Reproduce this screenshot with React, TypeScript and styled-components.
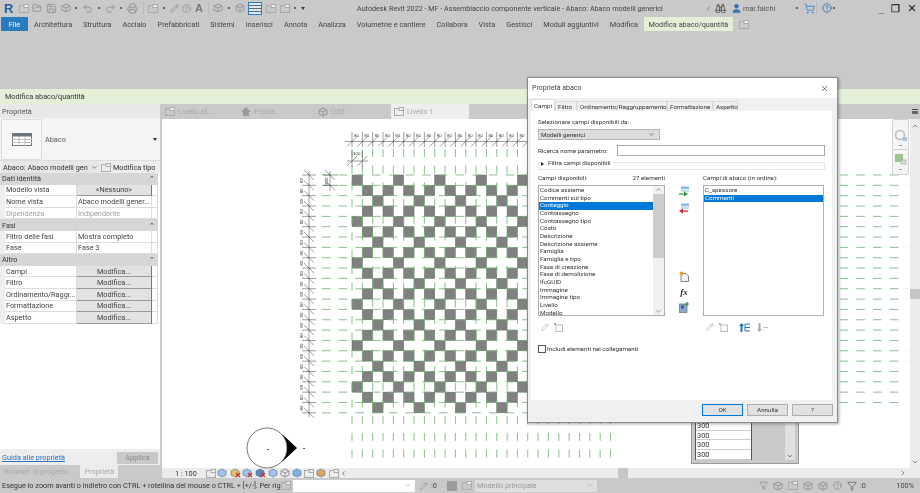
import React from 'react';
import styled, { createGlobalStyle } from 'styled-components';
import {
	Binoculars,
	ChevronDown,
	ChevronLeft,
	ChevronRight,
	ChevronUp,
	CircleHelp,
	Filter,
	FolderOpen,
	Pencil,
	Printer,
	Redo2,
	Save,
	ShoppingCart,
	Undo2,
	User,
	X,
} from 'lucide-react';

const GlobalStyle = createGlobalStyle`
	html, body {
		margin: 0;
		padding: 0;
		background: #c9c9c9;
		overflow: hidden;
	}
	* {
		box-sizing: border-box;
	}
`;

const UI_FONT = `'Roboto', 'Liberation Sans', sans-serif`;

const Window = styled.div`
	position: relative;
	width: 920px;
	height: 493px;
	display: flex;
	flex-direction: column;
	overflow: hidden;
	background: #c9c9c9;
	color: #333;
	font-family: ${UI_FONT};
	font-size: 7.3px;
	filter: blur(0.4px);
`;

/* title bar */
const TitleBar = styled.div`
	height: 16px;
	flex: none;
	display: flex;
	align-items: center;
	padding: 0 3px 0 4px;
`;

const Qat = styled.div`
	width: 353px;
	display: flex;
	align-items: center;
	gap: 3.7px;
	color: #8f8f8f;
`;

const RevitLogo = styled.span`
	font: bold 13px 'Liberation Sans', sans-serif;
	color: #1f5fa8;
	width: 11px;
`;

const QatDot = styled.span`
	width: 2px;
	height: 2px;
	margin: 0 1px;
	background: #666;
`;

const QatSep = styled.span`
	width: 1px;
	height: 12px;
	margin: 0 1px;
	background: #b9b9b9;
`;

const QatLetter = styled.span`
	font: bold 11px 'Liberation Sans', sans-serif;
	color: #777;
`;

const ThinLines = styled.span`
	width: 14px;
	height: 13px;
	border: 1px solid #2f7fc6;
	background: repeating-linear-gradient(#dfe9f2 0 2px, #5a6b7c 2px 3px);
`;

const Title = styled.div`
	width: 340px;
	font-size: 7.2px;
	white-space: nowrap;
	color: #444;
`;

const TitleRight = styled.div`
	flex: 1;
	display: flex;
	align-items: center;
	color: #555;
`;

const UserName = styled.span`
	width: 52px;
	margin-left: 1px;
	color: #555;
`;

const WindowButtons = styled.div`
	margin-left: auto;
	display: flex;
	align-items: center;
	gap: 7px;
	font: bold 10px 'Liberation Sans', sans-serif;
	color: #333;
`;

/* ribbon */
const TabBar = styled.div`
	height: 14px;
	margin-top: 1px;
	flex: none;
	display: flex;
	align-items: stretch;
	padding-left: 1px;
`;

const FileTab = styled.div`
	width: 27px;
	background: #2b7cbf;
	color: #fff;
	display: flex;
	align-items: center;
	justify-content: center;
	margin-right: 0.5px;
`;

const RibbonTab = styled.div<{ $active?: boolean }>`
	display: flex;
	align-items: center;
	white-space: nowrap;
	padding: 0 ${p => (p.$active ? '5px' : '5.5px')};
	background: ${p => (p.$active ? '#e4efd8' : 'transparent')};
	color: #444;
`;

const RibbonBody = styled.div`
	height: 58px;
	flex: none;
`;

const ContextBand = styled.div`
	height: 15px;
	flex: none;
	background: #e4efd8;
	display: flex;
	align-items: center;
	padding-left: 5px;
	color: #333;
`;

/* workspace */
const Workspace = styled.div`
	flex: 1;
	display: flex;
	min-height: 0;
`;

const PropertiesPane = styled.div`
	width: 160px;
	flex: none;
	display: flex;
	flex-direction: column;
	background: #ededed;
`;

const PaneHeader = styled.div`
	height: 14px;
	flex: none;
	padding-left: 2px;
	display: flex;
	align-items: center;
	color: #555;
	background: #e8e8e8;
`;

const TypeSelector = styled.div`
	height: 43px;
	flex: none;
	display: flex;
	align-items: center;
	background: #f4f4f4;
	padding-right: 3px;
	border-bottom: 1px solid #ddd;
`;

const TypeThumb = styled.div`
	width: 41px;
	height: 41px;
	margin-left: 1px;
	border: 1px solid #ddd;
	background: #f7f7f7;
	display: flex;
	align-items: center;
	justify-content: center;
`;

const TypeName = styled.span`
	margin-left: 3px;
	flex: 1;
	color: #555;
`;

const Caret = styled.span`
	width: 0;
	height: 0;
	border-left: 2px solid transparent;
	border-right: 2px solid transparent;
	border-top: 3px solid #333;
`;

const ComboRow = styled.div`
	height: 12px;
	flex: none;
	display: flex;
	align-items: center;
	gap: 2px;
	white-space: nowrap;
`;

const InstanceCombo = styled.div`
	width: 98px;
	height: 12px;
	margin-left: 1px;
	padding: 0 1px 0 2px;
	display: flex;
	align-items: center;
	justify-content: space-between;
	background: #e6e6e6;
	color: #333;
`;

const PropTable = styled.div`
	background: #fff;
	flex: 1;
	min-height: 0;
	padding-right: 2px;
`;

const SectionRow = styled.div`
	height: 11.6px;
	padding: 0 3px 0 2px;
	display: flex;
	align-items: center;
	justify-content: space-between;
	background: #d6d6d6;
	color: #333;
`;

const PropRow = styled.div`
	height: 11.6px;
	display: grid;
	grid-template-columns: 5px 72px 75px 6px;
	background: #eee;
`;

const PropCell = styled.div<{ $muted?: boolean }>`
	background: #fff;
	border-bottom: 1px solid #ddd;
	border-right: 1px solid #ddd;
	padding-left: 1px;
	display: flex;
	align-items: center;
	white-space: nowrap;
	color: ${p => (p.$muted ? '#a0a0a0' : '#444')};
`;

const PropButton = styled.div`
	background: #e2e2e2;
	border-right: 1px solid #777;
	border-bottom: 1px solid #999;
	display: flex;
	align-items: center;
	justify-content: center;
	color: #444;
`;

const PaneFooter = styled.div`
	height: 16px;
	flex: none;
	display: flex;
	align-items: center;
	justify-content: space-between;
	padding: 1px 2px 0 2px;
`;

const HelpLink = styled.span`
	color: #2a72c0;
	text-decoration: underline;
`;

const ApplyButton = styled.div`
	width: 41px;
	height: 12px;
	background: #c8c8c8;
	color: #8c8c8c;
	display: flex;
	align-items: center;
	justify-content: center;
`;

const PaneTabs = styled.div`
	height: 13px;
	flex: none;
	display: flex;
	background: #c9c9c9;
	color: #a9a9a9;
`;

const PaneTab = styled.div<{ $active?: boolean }>`
	padding: 0 4px;
	margin-left: ${p => (p.$active ? '3px' : '0')};
	display: flex;
	align-items: center;
	white-space: nowrap;
	background: ${p => (p.$active ? '#ebebeb' : 'transparent')};
`;

const ViewColumn = styled.div`
	flex: 1;
	margin-left: 2px;
	min-width: 0;
	display: flex;
	flex-direction: column;
`;

const ViewTabs = styled.div`
	height: 15px;
	flex: none;
	display: flex;
	align-items: stretch;
	color: #a8a8a8;
`;

const ViewTab = styled.div<{ $active?: boolean }>`
	width: ${p => (p.$active ? '78px' : '76.3px')};
	flex: none;
	padding-left: 3px;
	display: flex;
	align-items: center;
	gap: 3px;
	background: ${p => (p.$active ? '#eeeeee' : 'transparent')};
`;

const ViewTabsMenu = styled.span`
	margin: auto 2px auto auto;
	width: 6px;
	height: 5px;
	border-top: 1px solid #444;
	border-bottom: 3px solid #666;
`;

const CanvasRow = styled.div`
	flex: 1;
	min-height: 0;
	display: flex;
	background: #fff;
	position: relative;
`;

const Canvas = styled.svg`
	display: block;
	width: 748px;
	height: 350px;
	flex: none;
`;

const VScroll = styled.div`
	flex: 1;
	background: #ececec;
	display: flex;
	flex-direction: column;
	align-items: center;
	justify-content: space-between;
	padding: 3px 0 2px;
	color: #555;
`;

const VThumb = styled.div`
	width: 100%;
	height: 10px;
	background: #c6c6c6;
	margin-top: 0;
`;

const NavPanel = styled.div`
	position: absolute;
	left: 730px;
	top: 0;
	width: 17px;
	height: 56px;
	background: #f4f4f4;
	border: 1px solid #d2d2d2;
	border-radius: 2px;
	display: flex;
	flex-direction: column;
	align-items: center;
	padding-top: 9px;
	gap: 3px;
`;

const NavRule = styled.div`
	width: 13px;
	height: 1px;
	background: #ccc;
`;

const NavDot = styled.span`
	width: 3px;
	height: 1px;
	background: #999;
`;

const FloatingSchedule = styled.div`
	position: absolute;
	left: 529px;
	top: 280px;
	width: 108px;
	height: 65px;
	padding: 3px 3px;
	background: #c9c9c9;
	border: 1px solid #999;
	display: flex;
	justify-content: space-between;
	color: #333;
	font-size: 7.4px;
`;

const ScheduleColumn = styled.div`
	width: 57px;
	margin-top: 18px;
	border: 1px solid #555;
	border-top: 0;
	background: #fff;
`;

const ScheduleCell = styled.div`
	height: 9.7px;
	padding-left: 1px;
	border-bottom: 1px solid #ccc;
	line-height: 9px;
`;

const ScheduleScroll = styled.div`
	width: 10px;
	background: #e0e0e0;
	color: #555;
	display: flex;
	align-items: flex-end;
	justify-content: center;
`;

const HScrollRow = styled.div`
	height: 10px;
	flex: none;
	display: flex;
	background: #ececec;
	align-items: center;
`;

const ViewControlBar = styled.div`
	width: 456px;
	height: 100%;
	flex: none;
	background: #ececec;
	display: flex;
	align-items: center;
	padding-left: 13px;
	gap: 1.6px;
	color: #333;
	white-space: nowrap;
`;

const ScaleLabel = styled.span`
	width: 29px;
`;

const HThumb = styled.div`
	width: 10px;
	height: 100%;
	background: #c6c6c6;
`;

const HScrollEnd = styled.div`
	margin-left: auto;
	padding-right: 13px;
	color: #555;
	display: flex;
`;

/* status bar */
const StatusBar = styled.div`
	height: 15px;
	flex: none;
	display: flex;
	align-items: center;
	white-space: nowrap;
	padding-left: 2px;
`;

const StatusHint = styled.span`
	width: 279px;
	overflow: hidden;
	color: #333;
`;

const StatusField = styled.div<{ $w: number; $bg: string; $gap: number }>`
	width: ${p => p.$w}px;
	height: 12px;
	margin-left: ${p => p.$gap}px;
	padding: 0 4px 0 2px;
	background: ${p => p.$bg};
	color: #999;
	display: flex;
	align-items: center;
	justify-content: space-between;
`;

const StatusSquare = styled.span`
	width: 10px;
	height: 10px;
	margin-right: 5px;
	background: #9c9c9c;
`;

const StatusIcons = styled.div`
	margin-left: 162px;
	display: flex;
	align-items: center;
	gap: 5px;
	color: #8e8e8e;
`;

const ZoomLabel = styled.span`
	margin-left: auto;
	margin-right: 6px;
	color: #444;
`;

const ColonZero = styled.span`
	margin: 0 10px 0 3px;
	color: #444;
`;

/* dialog */
const Dialog = styled.div`
	position: absolute;
	left: 527px;
	top: 77px;
	width: 311px;
	height: 346px;
	background: #f0f0f0;
	border: 1px solid #8a8a8a;
	box-shadow: 1px 1px 3px rgba(0, 0, 0, 0.35);
	display: flex;
	flex-direction: column;
	font-size: 6.25px;
	color: #333;
`;

const DialogTitle = styled.div`
	height: 20px;
	flex: none;
	padding: 0 8px 0 4px;
	background: #fff;
	display: flex;
	align-items: center;
	justify-content: space-between;
	font-size: 7px;
	color: #444;
`;

const DialogTabs = styled.div`
	height: 12px;
	flex: none;
	margin-top: 1px;
	padding-left: 3px;
	display: flex;
	align-items: flex-end;
`;

const DialogTab = styled.div<{ $w: number; $active?: boolean }>`
	width: ${p => p.$w}px;
	height: ${p => (p.$active ? '12px' : '10px')};
	padding-left: 2px;
	display: flex;
	align-items: center;
	white-space: nowrap;
	background: ${p => (p.$active ? '#fff' : '#f0f0f0')};
	border: 1px solid #ddd;
	border-bottom: 0;
`;

const TabPage = styled.div`
	width: 301px;
	height: 289px;
	flex: none;
	margin-left: 3px;
	padding: 7px 7px 0;
	background: #fff;
	display: flex;
	flex-direction: column;
`;

const FieldLabel = styled.div`
	height: 9px;
	line-height: 9px;
	white-space: nowrap;
`;

const ComboBox = styled.div`
	width: 122px;
	height: 11px;
	margin-top: 2px;
	padding: 0 4px 0 2px;
	background: #dcdcdc;
	border: 1px solid #b5b5b5;
	display: flex;
	align-items: center;
	justify-content: space-between;
`;

const SearchRow = styled.div`
	margin-top: 5px;
	height: 11px;
	display: flex;
	align-items: center;
	justify-content: space-between;
	white-space: nowrap;
`;

const SearchInput = styled.div`
	width: 208px;
	height: 11px;
	border: 1px solid #aaa;
	background: #fff;
`;

const FilterGroup = styled.div`
	margin-top: 6px;
	height: 8px;
	border: 1px solid #e4e4e4;
	position: relative;
`;

const FilterLegend = styled.div`
	position: absolute;
	left: 2px;
	top: -4px;
	padding-right: 2px;
	display: flex;
	align-items: center;
	gap: 4px;
	background: #fff;
	white-space: nowrap;
	line-height: 9px;
`;

const FilterArrow = styled.span`
	width: 0;
	height: 0;
	border-left: 3px solid #222;
	border-top: 2.5px solid transparent;
	border-bottom: 2.5px solid transparent;
`;

const FieldColumns = styled.div`
	margin-top: 4px;
	display: grid;
	grid-template-columns: 127px 38px 121px;
`;

const ColumnHead = styled.div`
	height: 9px;
	line-height: 9px;
	display: flex;
	justify-content: space-between;
	white-space: nowrap;
`;

const ListBox = styled.div`
	margin-top: 2px;
	height: 131px;
	border: 1px solid #b0b0b0;
	display: flex;
	overflow: hidden;
	background: #fff;
`;

const ListItems = styled.div`
	flex: 1;
	min-width: 0;
	padding-top: 1px;
`;

const ListItem = styled.div<{ $selected?: boolean }>`
	height: 7.67px;
	line-height: 7.67px;
	padding-left: 1px;
	white-space: nowrap;
	background: ${p => (p.$selected ? '#0078d7' : 'transparent')};
	color: ${p => (p.$selected ? '#fff' : '#333')};
`;

const ListScroll = styled.div`
	width: 11px;
	flex: none;
	background: #f0f0f0;
	display: flex;
	flex-direction: column;
	align-items: center;
	justify-content: space-between;
	color: #555;
`;

const ListThumb = styled.div`
	width: 100%;
	height: 64px;
	margin-top: 1px;
	margin-bottom: auto;
	background: #cdcdcd;
`;

const MidTools = styled.div`
	height: 131px;
	margin-top: 11px;
	display: flex;
	flex-direction: column;
	align-items: center;
	padding-top: 1px;
`;

const MidToolGap = styled.div<{ $h: number }>`
	height: ${p => p.$h}px;
	flex: none;
`;

const FxMark = styled.span`
	font: italic bold 9px 'Liberation Serif', serif;
	color: #333;
`;

const ToolRow = styled.div`
	height: 14px;
	margin-top: 4px;
	padding-left: 3px;
	display: flex;
	align-items: center;
	gap: 4px;
	color: #b5b5b5;
`;

const CheckRow = styled.div`
	margin-top: 11px;
	display: flex;
	align-items: center;
	gap: 1px;
	white-space: nowrap;
`;

const CheckBox = styled.span`
	width: 8px;
	height: 8px;
	background: #fff;
	border: 1px solid #555;
`;

const DialogButtons = styled.div`
	flex: 1;
	display: flex;
	justify-content: flex-end;
	align-items: center;
	gap: 4px;
	padding: 0 4px 2px 0;
`;

const DialogButton = styled.div<{ $default?: boolean }>`
	width: 41px;
	height: 12px;
	background: #e1e1e1;
	border: 1px solid ${p => (p.$default ? '#0078d7' : '#adadad')};
	display: flex;
	align-items: center;
	justify-content: center;
`;

const SheetIcon = ({ x = 0 }: { x?: number }) => (
	<svg width="10" height="10" viewBox="0 0 10 10" style={{ marginLeft: x }}>
		<rect x="3" y="3" width="6.5" height="6.5" fill="none" stroke="#bbb" />
		<path d="M1 1l2 2M3 1L1 3" stroke="#999" strokeWidth=".8" />
	</svg>
);

const MoveIcon = ({ color, dir }: { color: string; dir: 'right' | 'left' }) => (
	<svg width="11" height="11" viewBox="0 0 11 11">
		<rect x="2" y="0.5" width="8" height="2.4" fill="#8db4dc" />
		<rect x="2" y="3.5" width="8" height="2.4" fill="#c5d9ee" />
		<path
			d={dir === 'right' ? 'M0 7.5h5V5.5L9 8l-4 2.5V8.8H0z' : 'M9 7.5H4V5.5L0 8l4 2.5V8.8h5z'}
			fill={color}
		/>
	</svg>
);

const NewParamIcon = () => (
	<svg width="10" height="11" viewBox="0 0 10 11">
		<path d="M2 2.5h5l2.5 2.5v5.5H2z" fill="#f4f4f4" stroke="#666" strokeWidth=".8" />
		<circle cx="2.5" cy="2.5" r="2" fill="#ef9a3c" />
	</svg>
);

const ImportIcon = () => (
	<svg width="10" height="11" viewBox="0 0 10 11">
		<rect x="0.5" y="2" width="7.5" height="8.5" fill="#8fa8c4" stroke="#556" strokeWidth=".6" />
		<rect x="2" y="3.5" width="3" height="3" fill="#2a5fa0" />
		<path d="M8 0v4M6 2h4" stroke="#2c9c3a" strokeWidth="1.2" />
	</svg>
);

const ScheduleIcon = () => (
	<svg width="20" height="13" viewBox="0 0 20 13">
		<rect x="0.5" y="0.5" width="19" height="12" fill="#fff" stroke="#777" />
		<rect x="0.5" y="0.5" width="19" height="3" fill="#6c7480" />
		<path d="M0 6.5h20M0 9.5h20M7 3v10M13 3v10" stroke="#bbb" />
	</svg>
);

const TabGlyph = () => (
	<svg width="10" height="9" viewBox="0 0 10 9">
		<rect x="0.5" y="1.5" width="9" height="7" fill="none" stroke="#aaa" />
		<rect x="5" y="0.5" width="4.5" height="3" fill="#eee" stroke="#aaa" />
	</svg>
);

const HomeGlyph = () => (
	<svg width="10" height="9" viewBox="0 0 10 9">
		<path d="M0 5l5-5 5 5H8v4H2V5z" fill="#9a9a9a" />
	</svg>
);

const CubeGlyph = ({ c = '#9a9a9a' }: { c?: string }) => (
	<svg width="10" height="10" viewBox="0 0 10 10">
		<path d="M5 1l4 2v4L5 9 1 7V3zM1 3l4 2 4-2M5 5v4" fill="none" stroke={c} strokeWidth="1.1" />
	</svg>
);

const ControlGlyph = ({ c, mark }: { c: string; mark?: string }) => (
	<svg width="11" height="10" viewBox="0 0 11 10">
		<path d="M1 3l4-2 4 2v4L5 9 1 7z" fill={c} stroke="#4b6f99" strokeWidth=".6" />
		{mark && <path d="M6 5l4 4M10 5l-4 4" stroke={mark} strokeWidth="1.4" />}
	</svg>
);

const NavGlyph = ({ green }: { green?: boolean }) => (
	<svg width="12" height="13" viewBox="0 0 12 13">
		{green ? (
			<>
				<rect x="0" y="1" width="8" height="8" fill="#9dc58f" />
				<rect x="6" y="7" width="5" height="4" fill="#ddd" stroke="#999" strokeWidth=".6" />
			</>
		) : (
			<>
				<circle cx="5" cy="6" r="4.5" fill="none" stroke="#bdbdbd" strokeWidth="1.6" />
				<rect x="8" y="8" width="4" height="4" fill="#a8c4de" />
			</>
		)}
	</svg>
);

const GRID = 10.34;
const ORIGIN_X = 352;
const ORIGIN_Y = 174;
const COLS = Array.from({ length: 26 }, (_, i) => ORIGIN_X + i * GRID);
const ROWS = Array.from({ length: 24 }, (_, i) => ORIGIN_Y + i * GRID);
const INK = '#3a3a3a';

const isFilled = (row: number, col: number) => {
	const r = row % 4;
	if (r === 0) return col % 4 === 0;
	if (r === 2) return col % 4 === 2;
	return col % 2 === 1;
};

const Drawing = () => (
	<Canvas viewBox="162 118 748 350">
		{/* cells */}
		{Array.from({ length: 23 }, (_, r) =>
			Array.from({ length: 17 }, (_, c) =>
				isFilled(r, c) ? (
					<rect
						key={`${r}-${c}`}
						x={ORIGIN_X + c * GRID}
						y={ORIGIN_Y + r * GRID}
						width={GRID}
						height={GRID}
						fill="#808080"
						stroke="#5f6a5f"
						strokeWidth=".5"
					/>
				) : null,
			),
		)}
		{/* grid lines */}
		{ROWS.map((y, i) => (
			<line
				key={`h${i}`}
				x1={322}
				x2={i === 23 ? 530 : 907}
				y1={y}
				y2={y}
				stroke="#7db87d"
				strokeWidth=".9"
				strokeDasharray="8.5 8.2"
			/>
		))}
		{COLS.map((x, i) => (
			<line
				key={`v${i}`}
				x1={x}
				x2={x}
				y1={148}
				y2={461}
				stroke="#7db87d"
				strokeWidth=".9"
				strokeDasharray="8 8.7"
			/>
		))}
		{/* top dimension */}
		<line x1={345} x2={530} y1={140.5} y2={140.5} stroke={INK} strokeWidth=".5" />
		{COLS.slice(0, 18).map((x, i) => (
			<g key={`t${i}`} stroke={INK} strokeWidth=".5">
				<line x1={x} x2={x} y1={131} y2={146} />
				<line x1={x - 5} x2={x + 5} y1={145.5} y2={135.5} />
				{i < 17 && (
					<text x={x + 2} y={136} fontSize="4.4" fill={INK} stroke="none" fontFamily="Liberation Sans, sans-serif">
						80
					</text>
				)}
			</g>
		))}
		<line x1={347} x2={368} y1={160} y2={160} stroke={INK} strokeWidth=".5" />
		{[ORIGIN_X, ORIGIN_X + GRID].map(x => (
			<g key={x} stroke={INK} strokeWidth=".5">
				<line x1={x} x2={x} y1={150} y2={166} />
				<line x1={x - 5} x2={x + 5} y1={165} y2={155} />
			</g>
		))}
		<text x={353} y={154} fontSize="4.4" fill={INK} fontFamily="Liberation Sans, sans-serif">
			300
		</text>
		{/* left dimension */}
		<line x1={309} x2={309} y1={170} y2={416} stroke={INK} strokeWidth=".5" />
		{ROWS.map((y, i) => (
			<g key={`l${i}`} stroke={INK} strokeWidth=".5">
				<line x1={302} x2={316} y1={y} y2={y} />
				<line x1={304} x2={314} y1={y - 5} y2={y + 5} />
				{i < 23 && (
					<text
						transform={`translate(303 ${y + 8}) rotate(-90)`}
						fontSize="4.4"
						fill={INK}
						stroke="none"
						fontFamily="Liberation Sans, sans-serif"
					>
						80
					</text>
				)}
			</g>
		))}
		<line x1={330} x2={330} y1={170} y2={190} stroke={INK} strokeWidth=".5" />
		{[ORIGIN_Y, ORIGIN_Y + GRID].map(y => (
			<g key={y} stroke={INK} strokeWidth=".5">
				<line x1={323} x2={338} y1={y} y2={y} />
				<line x1={325} x2={335} y1={y - 5} y2={y + 5} />
			</g>
		))}
		<text transform="translate(328 184) rotate(-90)" fontSize="4.4" fill={INK} fontFamily="Liberation Sans, sans-serif">
			300
		</text>
		{/* elevation symbol */}
		<circle cx={267} cy={447} r={20} fill="none" stroke={INK} strokeWidth=".7" />
		<path d="M282 433Q288 441 287 447Q288 453 282 461L297 447z" fill="#000" />
		<text x={268} y={451} fontSize="9" textAnchor="middle" fill="#111" fontFamily="Liberation Sans, sans-serif">
			-
		</text>
		<text x={304} y={450} fontSize="9" textAnchor="middle" fill="#111" fontFamily="Liberation Sans, sans-serif">
			-
		</text>
	</Canvas>
);

const RIBBON_TABS = [
	'Architettura',
	'Struttura',
	'Acciaio',
	'Prefabbricati',
	'Sistemi',
	'Inserisci',
	'Annota',
	'Analizza',
	'Volumetrie e cantiere',
	'Collabora',
	'Vista',
	'Gestisci',
	'Moduli aggiuntivi',
	'Modifica',
];

const AVAILABLE_FIELDS = [
	'Codice assieme',
	'Commenti sul tipo',
	'Conteggio',
	'Contrassegno',
	'Contrassegno tipo',
	'Costo',
	'Descrizione',
	'Descrizione assieme',
	'Famiglia',
	'Famiglia e tipo',
	'Fase di creazione',
	'Fase di demolizione',
	'IfcGUID',
	'Immagine',
	'Immagine tipo',
	'Livello',
	'Modello',
];

const PROP_SECTIONS = [
	{
		title: 'Dati identità',
		rows: [
			{ label: 'Modello vista', button: '<Nessuno>' },
			{ label: 'Nome vista', value: 'Abaco modelli gener...' },
			{ label: 'Dipendenza', value: 'Indipendente', muted: true },
		],
	},
	{
		title: 'Fasi',
		rows: [
			{ label: 'Filtro delle fasi', value: 'Mostra completo' },
			{ label: 'Fase', value: 'Fase 3' },
		],
	},
	{
		title: 'Altro',
		rows: [
			{ label: 'Campi', button: 'Modifica...' },
			{ label: 'Filtro', button: 'Modifica...' },
			{ label: 'Ordinamento/Raggr...', button: 'Modifica...' },
			{ label: 'Formattazione', button: 'Modifica...' },
			{ label: 'Aspetto', button: 'Modifica...' },
		],
	},
];

const App = () => {
	return (
		<Window>
			<GlobalStyle />
			<TitleBar>
				<Qat>
					<RevitLogo>R</RevitLogo>
					<TabGlyph />
					<FolderOpen size={10} />
					<Save size={11} />
					<CubeGlyph />
					<QatDot />
					<Undo2 size={11} />
					<QatDot />
					<Redo2 size={11} />
					<QatDot />
					<Printer size={11} />
					<QatSep />
					<TabGlyph />
					<QatDot />
					<Pencil size={9} />
					<CircleHelp size={9} />
					<QatLetter>A</QatLetter>
					<QatSep />
					<CubeGlyph />
					<QatDot />
					<CubeGlyph />
					<ThinLines />
					<TabGlyph />
					<TabGlyph />
					<QatDot />
					<Caret />
				</Qat>
				<Title>Autodesk Revit 2022 - MF - Assemblaccio componente verticale - Abaco: Abaco modelli generici</Title>
				<TitleRight>
					<ChevronLeft size={7} style={{ marginLeft: 8 }} />
					<Binoculars size={11} style={{ marginLeft: 3 }} />
					<User size={11} color="#2f6fb5" fill="#2f6fb5" style={{ marginLeft: 5 }} />
					<UserName>mar.falchi</UserName>
					<QatDot />
					<ShoppingCart size={11} color="#3f88c5" style={{ marginLeft: 5 }} />
					<QatSep />
					<CircleHelp size={10} color="#2f6fb5" style={{ marginLeft: 4 }} />
					<QatDot />
					<WindowButtons>
						<span>_</span>
						<span>❐</span>
						<X size={10} strokeWidth={3} />
					</WindowButtons>
				</TitleRight>
			</TitleBar>
			<TabBar>
				<FileTab>File</FileTab>
				{RIBBON_TABS.map(tab => (
					<RibbonTab key={tab}>{tab}</RibbonTab>
				))}
				<RibbonTab $active>Modifica abaco/quantità</RibbonTab>
				<RibbonTab>
					<TabGlyph />
				</RibbonTab>
			</TabBar>
			<RibbonBody />
			<ContextBand>Modifica abaco/quantità</ContextBand>
			<Workspace>
				<PropertiesPane>
					<PaneHeader>Proprietà</PaneHeader>
					<TypeSelector>
						<TypeThumb>
							<ScheduleIcon />
						</TypeThumb>
						<TypeName>Abaco</TypeName>
						<Caret />
					</TypeSelector>
					<ComboRow>
						<InstanceCombo>
							Abaco: Abaco modelli gen
							<ChevronDown size={7} />
						</InstanceCombo>
						<TabGlyph />
						Modifica tipo
					</ComboRow>
					<PropTable>
						{PROP_SECTIONS.map(section => (
							<React.Fragment key={section.title}>
								<SectionRow>
									{section.title}
									<span>⌃</span>
								</SectionRow>
								{section.rows.map(row => (
									<PropRow key={row.label}>
										<span />
										<PropCell $muted={row.muted}>{row.label}</PropCell>
										{row.button ? (
											<PropButton>{row.button}</PropButton>
										) : (
											<PropCell $muted={row.muted}>{row.value}</PropCell>
										)}
										<PropCell />
									</PropRow>
								))}
							</React.Fragment>
						))}
					</PropTable>
					<PaneFooter>
						<HelpLink>Guida alle proprietà</HelpLink>
						<ApplyButton>Applica</ApplyButton>
					</PaneFooter>
					<PaneTabs>
						<PaneTab>Browser di progetto...</PaneTab>
						<PaneTab $active>Proprietà</PaneTab>
					</PaneTabs>
				</PropertiesPane>
				<ViewColumn>
					<ViewTabs>
						<ViewTab>
							<TabGlyph />
							Livello rif.
						</ViewTab>
						<ViewTab>
							<HomeGlyph />
							Fronte
						</ViewTab>
						<ViewTab>
							<CubeGlyph />
							{'{3D}'}
						</ViewTab>
						<ViewTab $active>
							<TabGlyph />
							Livello 1
						</ViewTab>
						<ViewTabsMenu />
					</ViewTabs>
					<CanvasRow>
						<Drawing />
						<VScroll>
							<ChevronUp size={8} />
							<VThumb />
							<ChevronDown size={8} />
						</VScroll>
						<NavPanel>
							<NavGlyph />
							<NavDot />
							<NavRule />
							<NavGlyph green />
							<NavDot />
						</NavPanel>
						<FloatingSchedule>
							<ScheduleColumn>
								{['300', '300', '300', '300'].map((v, i) => (
									<ScheduleCell key={i}>{v}</ScheduleCell>
								))}
							</ScheduleColumn>
							<ScheduleScroll>
								<ChevronDown size={8} />
							</ScheduleScroll>
						</FloatingSchedule>
					</CanvasRow>
					<HScrollRow>
						<ViewControlBar>
							<ScaleLabel>1 : 100</ScaleLabel>
							<TabGlyph />
							<ControlGlyph c="#9ec3e8" />
							<ControlGlyph c="#e6c35c" mark="#c33" />
							<ControlGlyph c="#9ec3e8" mark="#c33" />
							<ControlGlyph c="#5b86b8" mark="#c33" />
							<ControlGlyph c="#9ec3e8" />
							<CubeGlyph />
							<ControlGlyph c="#7fb2de" />
							<TabGlyph />
							<ControlGlyph c="#d9a85c" />
							<TabGlyph />
							<ChevronLeft size={7} />
						</ViewControlBar>
						<HThumb />
						<HScrollEnd>
							<ChevronRight size={8} />
						</HScrollEnd>
					</HScrollRow>
				</ViewColumn>
			</Workspace>
			<StatusBar>
				<StatusHint>Esegue lo zoom avanti o indietro con CTRL + rotellina del mouse o CTRL + [+/-]. Per rig</StatusHint>
				<TabGlyph />
				<StatusField $w={122} $bg="#fff" $gap={2}>
					<span />
					<ChevronDown size={7} />
				</StatusField>
				<Pencil size={8} color="#999" style={{ marginLeft: 5 }} />
				<ColonZero>:0</ColonZero>
				<StatusSquare />
				<TabGlyph />
				<StatusField $w={122} $bg="#dedede" $gap={3}>
					Modello principale
					<ChevronDown size={7} />
				</StatusField>
				<StatusIcons>
					<Filter size={9} />
					<CubeGlyph />
					<TabGlyph />
					<CubeGlyph />
					<CubeGlyph />
					<CircleHelp size={9} />
					<Filter size={10} color="#667" />
				</StatusIcons>
				<ColonZero>:0</ColonZero>
				<ZoomLabel>100%</ZoomLabel>
			</StatusBar>
			<Dialog>
				<DialogTitle>
					Proprietà abaco
					<X size={9} color="#444" />
				</DialogTitle>
				<DialogTabs>
					<DialogTab $w={24} $active>Campi</DialogTab>
					<DialogTab $w={22}>Filtro</DialogTab>
					<DialogTab $w={90}>Ordinamento/Raggruppamento</DialogTab>
					<DialogTab $w={46}>Formattazione</DialogTab>
					<DialogTab $w={25}>Aspetto</DialogTab>
				</DialogTabs>
				<TabPage>
					<FieldLabel>Selezionare campi disponibili da:</FieldLabel>
					<ComboBox>
						Modelli generici
						<ChevronDown size={7} />
					</ComboBox>
					<SearchRow>
						Ricerca nome parametro:
						<SearchInput />
					</SearchRow>
					<FilterGroup>
						<FilterLegend>
							<FilterArrow />
							Filtra campi disponibili
						</FilterLegend>
					</FilterGroup>
					<FieldColumns>
						<div>
							<ColumnHead>
								<span>Campi disponibili:</span>
								<span>27 elementi</span>
							</ColumnHead>
							<ListBox>
								<ListItems>
									{AVAILABLE_FIELDS.map(field => (
										<ListItem key={field} $selected={field === 'Conteggio'}>
											{field}
										</ListItem>
									))}
								</ListItems>
								<ListScroll>
									<ChevronUp size={7} />
									<ListThumb />
									<ChevronDown size={7} />
								</ListScroll>
							</ListBox>
							<ToolRow>
								<Pencil size={8} />
								<SheetIcon />
							</ToolRow>
						</div>
						<MidTools>
							<MoveIcon color="#2c9c3a" dir="right" />
							<MidToolGap $h={6} />
							<MoveIcon color="#d8232a" dir="left" />
							<MidToolGap $h={57} />
							<NewParamIcon />
							<MidToolGap $h={5} />
							<FxMark>fx</FxMark>
							<MidToolGap $h={5} />
							<ImportIcon />
						</MidTools>
						<div>
							<ColumnHead>
								<span>Campi di abaco (in ordine):</span>
							</ColumnHead>
							<ListBox>
								<ListItems>
									<ListItem>C_spessore</ListItem>
									<ListItem $selected>Commenti</ListItem>
								</ListItems>
							</ListBox>
							<ToolRow>
								<Pencil size={8} />
								<SheetIcon />
								<svg width="11" height="9" viewBox="0 0 11 9" style={{ marginLeft: 7 }}>
									<path d="M2.5 0L5 3H3.5v6h-2V3H0z" fill="#1d6fc2" />
									<path d="M6 1h5M6 4.5h5M6 8h5M6 1v7" stroke="#1d6fc2" strokeWidth="1" fill="none" />
								</svg>
								<svg width="11" height="9" viewBox="0 0 11 9" style={{ marginLeft: 3 }}>
									<path d="M2.5 9L5 6H3.5V0h-2v6H0z" fill="#aaa" />
									<path d="M6 4.5h5" stroke="#bbb" />
								</svg>
							</ToolRow>
						</div>
					</FieldColumns>
					<CheckRow>
						<CheckBox />
						Includi elementi nei collegamenti
					</CheckRow>
				</TabPage>
				<DialogButtons>
					<DialogButton $default>OK</DialogButton>
					<DialogButton>Annulla</DialogButton>
					<DialogButton>?</DialogButton>
				</DialogButtons>
			</Dialog>
		</Window>
	);
};

export default App;
